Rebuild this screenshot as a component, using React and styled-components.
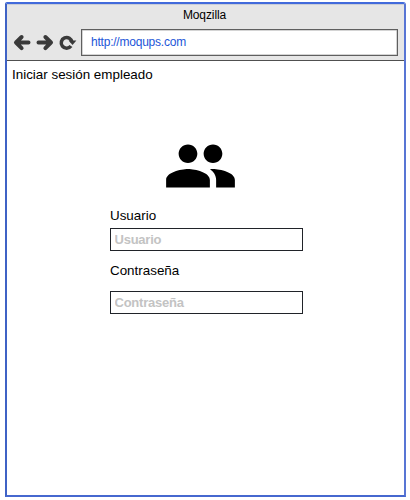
import React from "react";
import styled, { createGlobalStyle } from "styled-components";

const GlobalStyle = createGlobalStyle`
  *, *::before, *::after { box-sizing: border-box; }
  body { margin: 0; background: #fff; font-family: "Liberation Sans", Arial, sans-serif; }
`;

const Page = styled.main`
  height: 500px;
  padding: 2px 3px 3px 5px;
`;

const Window = styled.section`
  width: 401px;
  height: 495px;
  border: 2px solid #4668cf;
  border-top-color: #416adb;
  border-left-color: #3f62c5;
  border-right-color: #5875d4;
  border-radius: 2px 3px 0 0;
  background: #fff;
`;

const Header = styled.header`
  height: 57px;
  background: #e6e6e6;
  border-top: 1px solid #c9cdd8;
  border-bottom: 1px solid #505050;
`;

const Title = styled.h1`
  margin: 0;
  padding: 2px 2px 0 0;
  height: 24px;
  font-size: 12px;
  font-weight: 400;
  line-height: 16px;
  letter-spacing: -0.1px;
  text-align: center;
  color: #000;
`;

const Toolbar = styled.nav`
  display: flex;
  align-items: center;
  padding: 0 6px;
`;

const NavIcons = styled.svg`
  display: block;
  width: 68px;
  height: 26px;
  flex: none;
`;

const AddressBar = styled.div`
  flex: 1;
  height: 27px;
  border: 1px solid #5f5f5f;
  box-shadow: inset 0 0 0 0.5px #aaa;
  background: #fff;
  padding-left: 9px;
  font-size: 12px;
  line-height: 24px;
  letter-spacing: -0.22px;
  color: #1c55d8;
`;

const Heading = styled.h2`
  margin: 0;
  padding: 6px 0 0 5px;
  font-size: 13.4px;
  font-weight: 400;
  line-height: 16px;
  color: #000;
`;

const Form = styled.form`
  width: 193px;
  margin: 46px 0 0 103px;
`;

const PeopleIcon = styled.svg`
  display: block;
  width: 75px;
  height: 74px;
  margin-left: 52.6px;
`;

const Field = styled.div`
  margin-top: ${({ $top }) => $top}px;
`;

const Label = styled.label`
  display: block;
  font-size: 13.4px;
  line-height: 16px;
  color: #000;
`;

const Input = styled.input`
  display: block;
  width: 193px;
  height: 23px;
  margin-top: ${({ $gap }) => $gap}px;
  padding: 0 0 1px 3.5px;
  border: 1px solid #202329;
  border-radius: 0;
  outline: none;
  background: #fff;
  font: 700 13px "Liberation Sans", Arial, sans-serif;
  letter-spacing: -0.24px;
  &::placeholder { color: #c3c3c3; opacity: 1; }
`;

export default function App() {
  return (
    <Page>
      <GlobalStyle />
      <Window>
        <Header>
          <Title>Moqzilla</Title>
          <Toolbar>
            <NavIcons viewBox="0 0 68 26" fill="none" stroke="#3a3a3a" strokeWidth="4" strokeLinecap="round" strokeLinejoin="round">
              <path d="M15.5 12.5H3.5M8.6 7 3 12.5l5.6 5.6" />
              <path d="M25.5 12.5h12.5M32.4 7l5.6 5.5-5.6 5.6" />
              <path d="M59 12.2A5.4 5.4 0 1 0 58 16" strokeWidth="3.5" strokeLinecap="butt" />
              <path d="M55.6 10.6h7.8l-3.9 4.4z" fill="#3a3a3a" stroke="none" />
            </NavIcons>
            <AddressBar>http://moqups.com</AddressBar>
          </Toolbar>
        </Header>
        <Heading>Iniciar sesión empleado</Heading>
        <Form>
          <PeopleIcon viewBox="0 0 24 24" preserveAspectRatio="none" aria-hidden="true">
            <path d="M16 11c1.66 0 2.99-1.34 2.99-3S17.66 5 16 5s-3 1.34-3 3 1.34 3 3 3zm-8 0c1.66 0 2.99-1.34 2.99-3S9.66 5 8 5 5 6.34 5 8s1.34 3 3 3zm0 2c-2.33 0-7 1.17-7 3.5V19h14v-2.5C15 14.17 10.33 13 8 13zm8 0c-.29 0-.62.02-.97.05 1.16.84 1.97 1.97 1.97 3.45V19h6v-2.5c0-2.33-4.67-3.5-7-3.5z" />
          </PeopleIcon>
          <Field $top={5}>
            <Label htmlFor="user">Usuario</Label>
            <Input id="user" placeholder="Usuario" $gap={4} />
          </Field>
          <Field $top={12}>
            <Label htmlFor="password">Contraseña</Label>
            <Input id="password" placeholder="Contraseña" $gap={12} />
          </Field>
        </Form>
      </Window>
    </Page>
  );
}
